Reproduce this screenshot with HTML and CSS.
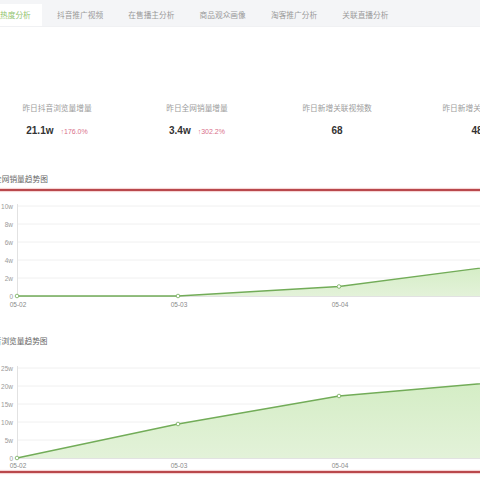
FILE: index.html
```html
<!DOCTYPE html>
<html lang="zh">
<head>
<meta charset="utf-8">
<link rel="stylesheet" href="styles.css">
</head>
<body>
<div class="page">
  <div class="tabs">
    <div class="tab tab-active">热度分析</div>
    <div class="tab tab-second">抖音推广视频</div>
    <div class="tab">在售播主分析</div>
    <div class="tab">商品观众画像</div>
    <div class="tab">淘客推广分析</div>
    <div class="tab">关联直播分析</div>
  </div>

  <div class="stats">
    <div class="stat">
      <div class="stat-label">昨日抖音浏览量增量</div>
      <div class="stat-value"><span class="num">21.1w</span><span class="pct">↑176.0%</span></div>
    </div>
    <div class="stat">
      <div class="stat-label">昨日全网销量增量</div>
      <div class="stat-value"><span class="num">3.4w</span><span class="pct">↑302.2%</span></div>
    </div>
    <div class="stat">
      <div class="stat-label">昨日新增关联视频数</div>
      <div class="stat-value"><span class="num">68</span></div>
    </div>
    <div class="stat">
      <div class="stat-label">昨日新增关联直播数</div>
      <div class="stat-value"><span class="num">48</span></div>
    </div>
  </div>

  <div class="section-title title-one">全网销量趋势图</div>
  <div class="redline"></div>
  <svg class="chart chart-one" width="480" height="120" viewBox="0 0 480 120">
    <defs>
      <linearGradient id="g1" x1="0" y1="0" x2="0" y2="1">
        <stop offset="0" stop-color="#d4edc5"/>
        <stop offset="1" stop-color="#e3f2d9"/>
      </linearGradient>
    </defs>
    <g class="grid">
      <line x1="17" y1="15" x2="480" y2="15"/>
      <line x1="17" y1="33" x2="480" y2="33"/>
      <line x1="17" y1="51" x2="480" y2="51"/>
      <line x1="17" y1="69" x2="480" y2="69"/>
      <line x1="17" y1="87" x2="480" y2="87"/>
    </g>
    <line class="axis" x1="17.5" y1="13" x2="17.5" y2="105"/>
    <line class="axis" x1="17" y1="105.5" x2="480" y2="105.5"/>
    <g class="ylab">
      <text x="13" y="17.5">10w</text>
      <text x="13" y="35.5">8w</text>
      <text x="13" y="53.5">6w</text>
      <text x="13" y="71.5">4w</text>
      <text x="13" y="89.5">2w</text>
      <text x="13" y="107.5">0</text>
    </g>
    <g class="xlab">
      <text x="18" y="116">05-02</text>
      <text x="179" y="116">05-03</text>
      <text x="340" y="116">05-04</text>
    </g>
    <path class="area" fill="url(#g1)" d="M17 105 L178 105 L339 95.5 L500 74.5 L500 105 Z"/>
    <path class="line" d="M17 105 L178 105 L339 95.5 L500 74.5"/>
    <g class="dots">
      <circle cx="17" cy="105" r="1.8"/>
      <circle cx="178" cy="105" r="1.8"/>
      <circle cx="339" cy="95.5" r="1.8"/>
    </g>
  </svg>

  <div class="section-title title-two">抖音浏览量趋势图</div>
  <svg class="chart chart-two" width="480" height="124" viewBox="0 0 480 124">
    <defs>
      <linearGradient id="g2" x1="0" y1="0" x2="0" y2="1">
        <stop offset="0" stop-color="#d4edc5"/>
        <stop offset="1" stop-color="#e3f2d9"/>
      </linearGradient>
    </defs>
    <g class="grid">
      <line x1="17" y1="21" x2="480" y2="21"/>
      <line x1="17" y1="39" x2="480" y2="39"/>
      <line x1="17" y1="57" x2="480" y2="57"/>
      <line x1="17" y1="75" x2="480" y2="75"/>
      <line x1="17" y1="93" x2="480" y2="93"/>
    </g>
    <line class="axis" x1="17.5" y1="19" x2="17.5" y2="111"/>
    <line class="axis" x1="17" y1="111.5" x2="480" y2="111.5"/>
    <g class="ylab">
      <text x="13" y="23.5">25w</text>
      <text x="13" y="41.5">20w</text>
      <text x="13" y="59.5">15w</text>
      <text x="13" y="77.5">10w</text>
      <text x="13" y="95.5">5w</text>
      <text x="13" y="113.5">0</text>
    </g>
    <g class="xlab">
      <text x="18" y="121">05-02</text>
      <text x="179" y="121">05-03</text>
      <text x="340" y="121">05-04</text>
    </g>
    <path class="area" fill="url(#g2)" d="M17 111 L178 77 L339 49 L500 35 L500 111 Z"/>
    <path class="line" d="M17 111 L178 77 L339 49 L500 35"/>
    <g class="dots">
      <circle cx="17" cy="111" r="1.8"/>
      <circle cx="178" cy="77" r="1.8"/>
      <circle cx="339" cy="49" r="1.8"/>
    </g>
  </svg>
  <div class="redline"></div>
</div>
</body>
</html>
```

FILE: styles.css
```css
html, body {
  margin: 0;
  padding: 0;
  background: #ffffff;
}

body {
  font-family: "Noto Sans CJK SC", "Noto Sans", "Liberation Sans", sans-serif;
  width: 480px;
  height: 480px;
  overflow: hidden;
}

.page {
  width: 480px;
  display: flex;
  flex-direction: column;
}

.tabs {
  display: flex;
  align-items: stretch;
  height: 27px;
  padding-top: 4px;
  box-sizing: border-box;
  background: #f4f5f7;
  border-bottom: 1px solid #f0f1f3;
}

.tab {
  display: flex;
  align-items: center;
  padding: 0 12.6px;
  font-size: 7.7px;
  color: #9a9a9a;
  white-space: nowrap;
  line-height: 1;
}

.tab-active {
  background: #ffffff;
  color: #92c46f;
  padding-left: 0;
  padding-right: 11px;
}

.tab-second {
  margin-left: 2.6px;
}

.stats {
  display: grid;
  grid-template-columns: repeat(4, 140px);
  margin-left: -13px;
  padding-top: 75px;
}

.stat {
  display: flex;
  flex-direction: column;
  align-items: center;
}

.stat-label {
  font-size: 7.7px;
  line-height: 12px;
  color: #9c9c9c;
  white-space: nowrap;
}

.stat-value {
  margin-top: 10px;
  display: flex;
  align-items: baseline;
  gap: 7px;
  line-height: 14px;
}

.num {
  font-family: "Liberation Sans", Arial, sans-serif;
  font-weight: bold;
  font-size: 10px;
  color: #333333;
}

.pct {
  font-family: "Liberation Sans", Arial, sans-serif;
  font-size: 7px;
  color: #d9708a;
}

.section-title {
  font-size: 7.7px;
  line-height: 12px;
  color: #666666;
  white-space: nowrap;
}

.title-one {
  margin-top: 34px;
  margin-left: -6px;
}

.title-two {
  margin-top: 24px;
  margin-left: -14px;
}

.redline {
  height: 2px;
  margin-top: 4px;
  background: #b9484c;
  box-shadow: 0 0 1px 1px rgba(230, 150, 150, 0.45);
}

.chart-two + .redline {
  margin-top: 0;
}

.chart {
  display: block;
}

.grid line {
  stroke: #f0f0f0;
  stroke-width: 1;
}

.axis {
  stroke: #e2e2e2;
  stroke-width: 1;
}

.ylab text {
  font-family: "Liberation Sans", Arial, sans-serif;
  font-size: 6.5px;
  fill: #9a9a9a;
  text-anchor: end;
}

.xlab text {
  font-family: "Liberation Sans", Arial, sans-serif;
  font-size: 6.5px;
  fill: #8a8a8a;
  text-anchor: middle;
}

.line {
  fill: none;
  stroke: #72ac58;
  stroke-width: 1.3;
}

.dots circle {
  fill: #ffffff;
  stroke: #72ac58;
  stroke-width: 0.8;
}
```
